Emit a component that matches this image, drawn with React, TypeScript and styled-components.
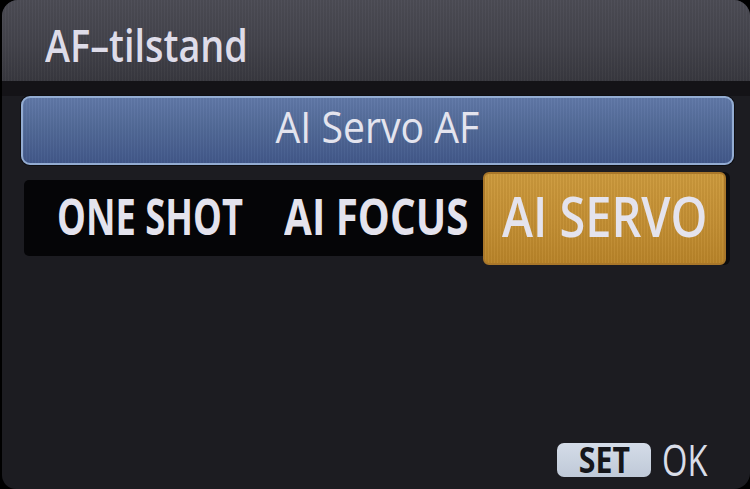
import React from "react";
import styled, { createGlobalStyle } from "styled-components";

const Global = createGlobalStyle`
  html, body { margin: 0; padding: 0; background: #000; }
  body { width: 750px; height: 489px; overflow: hidden; }
`;

const Screen = styled.div`
  box-sizing: border-box;
  width: 748px;
  height: 489px;
  margin-left: 2px;
  border-radius: 16px 16px 16px 14px;
  overflow: hidden;
  background: #1c1c21;
  display: flex;
  flex-direction: column;
  font-family: "Open Sans", "Liberation Sans", sans-serif;
`;

const Squeeze = styled.span<{ $sx: number; $origin?: string }>`
  display: inline-block;
  white-space: nowrap;
  transform: scaleX(${(p) => p.$sx});
  transform-origin: ${(p) => p.$origin || "center"} center;
`;

const Header = styled.div`
  height: 81px;
  flex: none;
  display: flex;
  align-items: center;
  padding-left: 43px;
  padding-top: 7px;
  box-sizing: border-box;
  background:
    repeating-linear-gradient(90deg, rgba(255,255,255,0.025) 0 1px, rgba(0,0,0,0.03) 1px 3px),
    linear-gradient(180deg, #4c4c55 0%, #43434b 55%, #38383f 100%);
`;

const Title = styled.h1`
  margin: 0;
  font-weight: 600;
  font-size: 45px;
  line-height: 1;
  color: #dedce9;
`;

const Gap = styled.div`
  height: 15px;
  flex: none;
  background: #141317;
`;

const ModeBar = styled.div`
  flex: none;
  box-sizing: border-box;
  height: 69px;
  margin: 0 16px 0 19px;
  border: 2px solid #93acd2;
  border-radius: 9px;
  box-shadow: 0 0 0 1px #0e0e12;
  background:
    repeating-linear-gradient(90deg, rgba(255,255,255,0.025) 0 1px, rgba(0,0,0,0.03) 1px 3px),
    linear-gradient(180deg, #6179a8 0%, #526a98 45%, #42588a 100%);
  display: flex;
  align-items: center;
  justify-content: center;
  font-size: 44px;
  line-height: 1;
  color: #e4e4ee;
  padding-bottom: 9px;
`;

const Strip = styled.div`
  flex: none;
  height: 76px;
  margin: 15px 22px 0 22px;
  background: #050507;
  border-radius: 5px;
  display: grid;
  grid-template-columns: 256px 196px 250px;
  grid-template-rows: 76px;
  align-items: center;
`;

const Option = styled.div<{ $selected?: boolean }>`
  box-sizing: border-box;
  display: flex;
  align-items: center;
  justify-content: center;
  font-weight: 700;
  line-height: 1;
  color: #e4e3ed;
  font-size: ${(p) => (p.$selected ? "56px" : "50px")};
  height: ${(p) => (p.$selected ? "93px" : "76px")};
  padding-bottom: ${(p) => (p.$selected ? "7px" : "5px")};
  padding-right: ${(p) => (p.$selected ? "0" : "4px")};
  ${(p) =>
    p.$selected &&
    `
    margin-left: 7px;
    border: 2px solid #a9772a;
    border-radius: 6px;
    background:
      repeating-linear-gradient(90deg, rgba(255,255,255,0.035) 0 1px, rgba(0,0,0,0.04) 1px 3px),
      linear-gradient(180deg, #cd9a3c 0%, #c48f33 55%, #b98429 100%);
    box-shadow: 4px 0 0 #0b0b0d;
    font-weight: 600;
  `}
`;

const Footer = styled.div`
  margin-top: auto;
  display: flex;
  justify-content: flex-end;
  align-items: center;
  gap: 11px;
  padding: 0 43px 12px 0;
`;

const SetBadge = styled.span`
  box-sizing: border-box;
  width: 94px;
  height: 34px;
  border-radius: 7px;
  background: linear-gradient(180deg, #d4dce8 0%, #bfc9d8 100%);
  color: #15161b;
  display: flex;
  align-items: center;
  justify-content: center;
  font-weight: 700;
  font-size: 36px;
  line-height: 1;
`;

const OkText = styled.span`
  display: block;
  width: 45px;
  font-size: 43px;
  line-height: 34px;
  color: #d9dde8;
`;

export default function App() {
  return (
    <>
      <Global />
      <Screen>
        <Header>
          <Title>
            <Squeeze $sx={0.84} $origin="left">AF–tilstand</Squeeze>
          </Title>
        </Header>
        <Gap />
        <ModeBar>
          <Squeeze $sx={0.89}>AI Servo AF</Squeeze>
        </ModeBar>
        <Strip>
          <Option>
            <Squeeze $sx={0.726}>ONE SHOT</Squeeze>
          </Option>
          <Option>
            <Squeeze $sx={0.807}>AI FOCUS</Squeeze>
          </Option>
          <Option $selected>
            <Squeeze $sx={0.837}>AI SERVO</Squeeze>
          </Option>
        </Strip>
        <Footer>
          <SetBadge>
            <Squeeze $sx={0.84}>SET</Squeeze>
          </SetBadge>
          <OkText>
            <Squeeze $sx={0.76} $origin="left">OK</Squeeze>
          </OkText>
        </Footer>
      </Screen>
    </>
  );
}
